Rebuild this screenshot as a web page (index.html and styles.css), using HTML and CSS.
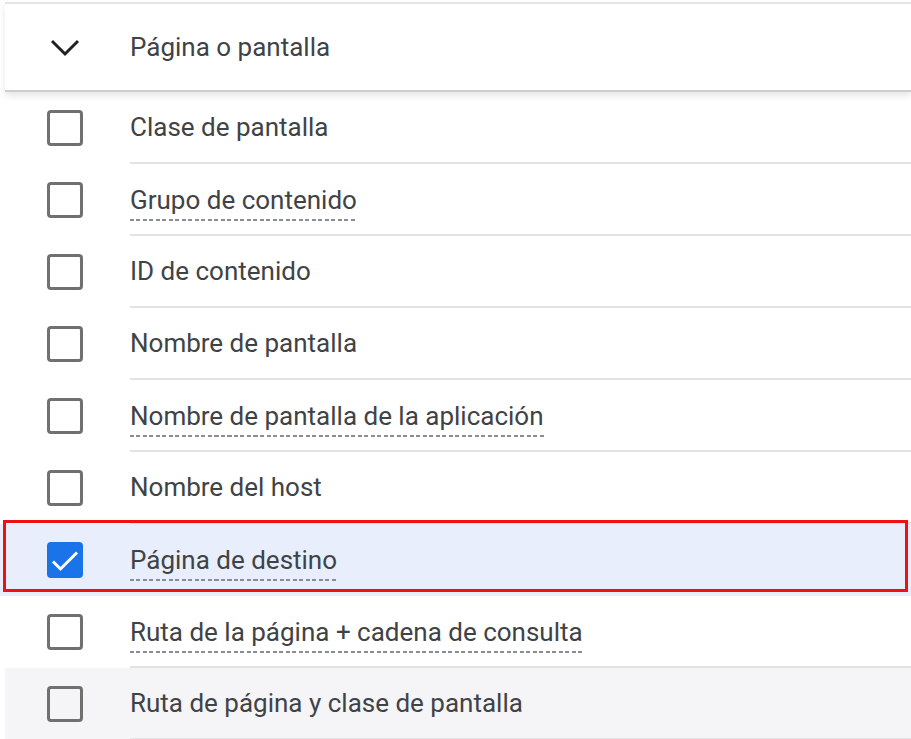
FILE: index.html
```html
<!DOCTYPE html>
<html>
  <head>
    <meta charset="utf-8">
    <link rel="stylesheet" href="styles.css">
  </head>
  <body>
    <div class="panel">
      <div class="grupo">
        <span class="icono">
          <svg width="36" height="36" viewBox="0 0 36 36"><path d="M5 12 L18 25 L31 12" fill="none" stroke="#202124" stroke-width="3"/></svg>
        </span>
        <span class="grupo-titulo">Página o pantalla</span>
      </div>

      <div class="fila">
        <span class="caja"></span>
        <div class="celda"><span>Clase de pantalla</span></div>
      </div>
      <div class="fila">
        <span class="caja"></span>
        <div class="celda"><span class="ayuda">Grupo de contenido</span></div>
      </div>
      <div class="fila">
        <span class="caja"></span>
        <div class="celda"><span>ID de contenido</span></div>
      </div>
      <div class="fila">
        <span class="caja"></span>
        <div class="celda"><span>Nombre de pantalla</span></div>
      </div>
      <div class="fila">
        <span class="caja"></span>
        <div class="celda"><span class="ayuda">Nombre de pantalla de la aplicación</span></div>
      </div>
      <div class="fila">
        <span class="caja"></span>
        <div class="celda"><span>Nombre del host</span></div>
      </div>
      <div class="fila marcada">
        <span class="caja activa">
          <svg width="36" height="36" viewBox="0 0 36 36"><path d="M6 19.5 L13.5 27 L30 10.5" fill="none" stroke="#fff" stroke-width="3"/></svg>
        </span>
        <div class="celda"><span class="ayuda">Página de destino</span></div>
      </div>
      <div class="fila">
        <span class="caja"></span>
        <div class="celda"><span class="ayuda">Ruta de la página + cadena de consulta</span></div>
      </div>
      <div class="fila encima">
        <span class="caja"></span>
        <div class="celda"><span>Ruta de página y clase de pantalla</span></div>
      </div>
    </div>
  </body>
</html>
```

FILE: styles.css
```css
/* lista de dimensiones */
body {
  margin: 0;
  background: #fff;
  font-family: Roboto, "Liberation Sans", Arial, sans-serif;
  color: #404346;
  font-size: 26px;
}

.panel {
  width: 911px;
  overflow: hidden;
}

.grupo {
  display: flex;
  align-items: center;
  height: 86px;
  margin: 2px 0 0 5px;
  padding-left: 42px;
  border-top: 2px solid #e4e4e4;
  border-bottom: 2px solid #cdcdcd;
  box-shadow: 0 4px 7px rgba(0, 0, 0, 0.10);
  position: relative;
  z-index: 1;
}

.icono {
  width: 36px;
  height: 36px;
  display: flex;
}

.grupo-titulo {
  margin-left: 47px;
}

.fila {
  display: flex;
  align-items: center;
  height: 72px;
  padding-left: 47px;
  position: relative;
}

.caja {
  width: 36px;
  height: 36px;
  box-sizing: border-box;
  border: 3px solid #707070;
  border-radius: 4px;
  flex-shrink: 0;
}

.caja.activa {
  border: none;
  background: #1a73e8;
  display: flex;
}

.celda {
  flex: 1;
  height: 70px;
  margin-left: 47px;
  display: flex;
  align-items: center;
  border-bottom: 2px solid #e3e3e3;
}

.ayuda {
  padding-bottom: 6px;
  margin-top: 7px;
  line-height: 30px;
  background: repeating-linear-gradient(to right, #8a8e94 0 4px, transparent 4px 6.5px) left bottom / 100% 2px no-repeat;
}

.marcada {
  background: #e8eefc;
}

.marcada .celda {
  border-bottom-color: #e8eefc;
}

.marcada::after {
  content: "";
  position: absolute;
  top: -4px;
  bottom: 4px;
  left: 3px;
  right: 3px;
  border: 3px solid #ee1111;
}

.encima {
  background: #f5f5f7;
  margin-left: 5px;
  padding-left: 42px;
}
```
